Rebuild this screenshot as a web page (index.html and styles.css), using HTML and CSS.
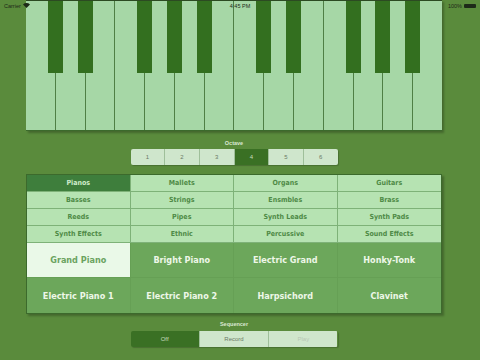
FILE: index.html
```html
<!DOCTYPE html>
<html lang="en">
<head>
    <meta charset="UTF-8">
    <meta name="viewport" content="width=device-width, initial-scale=1.0">
    <title>Synth</title>
    <link rel="stylesheet" href="styles.css">
</head>
<body>
    <!-- status bar -->
    <div class="status-bar">
        <span class="carrier">Carrier
            <svg class="wifi" width="7" height="5" viewBox="0 0 14 10">
                <path d="M7 10 L0 3 A10 10 0 0 1 14 3 Z" fill="#1d2a18"/>
            </svg>
        </span>
        <span class="clock">4:45 PM</span>
        <span class="battery">100% <span class="battery-icon"></span></span>
    </div>

    <div class="main">
        <!-- keyboard -->
        <div class="keyboard">
            <div class="white-key"><div class="black-key"></div></div>
            <div class="white-key"><div class="black-key"></div></div>
            <div class="white-key"></div>
            <div class="white-key"><div class="black-key"></div></div>
            <div class="white-key"><div class="black-key"></div></div>
            <div class="white-key"><div class="black-key"></div></div>
            <div class="white-key"></div>
            <div class="white-key"><div class="black-key"></div></div>
            <div class="white-key"><div class="black-key"></div></div>
            <div class="white-key"></div>
            <div class="white-key"><div class="black-key"></div></div>
            <div class="white-key"><div class="black-key"></div></div>
            <div class="white-key"><div class="black-key"></div></div>
            <div class="white-key"></div>
        </div>

        <div class="section-label octave-label">Octave</div>
        <div class="segmented">
            <div class="segment">1</div>
            <div class="segment">2</div>
            <div class="segment">3</div>
            <div class="segment active">4</div>
            <div class="segment">5</div>
            <div class="segment">6</div>
        </div>

        <!-- sounds -->
        <div class="panel">
            <div class="categories">
                <div class="category active">Pianos</div>
                <div class="category">Mallets</div>
                <div class="category">Organs</div>
                <div class="category">Guitars</div>
                <div class="category">Basses</div>
                <div class="category">Strings</div>
                <div class="category">Ensmbles</div>
                <div class="category">Brass</div>
                <div class="category">Reeds</div>
                <div class="category">Pipes</div>
                <div class="category">Synth Leads</div>
                <div class="category">Synth Pads</div>
                <div class="category">Synth Effects</div>
                <div class="category">Ethnic</div>
                <div class="category">Percussive</div>
                <div class="category">Sound Effects</div>
            </div>
            <div class="instruments">
                <div class="instrument active">Grand Piano</div>
                <div class="instrument">Bright Piano</div>
                <div class="instrument">Electric Grand</div>
                <div class="instrument">Honky-Tonk</div>
                <div class="instrument">Electric Piano 1</div>
                <div class="instrument">Electric Piano 2</div>
                <div class="instrument">Harpsichord</div>
                <div class="instrument">Clavinet</div>
            </div>
        </div>

        <div class="section-label sequencer-label">Sequencer</div>
        <div class="segmented">
            <div class="segment active">Off</div>
            <div class="segment">Record</div>
            <div class="segment disabled">Play</div>
        </div>
    </div>
</body>
</html>
```

FILE: styles.css
```css
body {
    margin: 0;
    width: 480px;
    height: 360px;
    overflow: hidden;
    background-color: #5a8b3c;
    font-family: "Liberation Sans", Arial, sans-serif;
    position: relative;
}

/* status bar */
.status-bar {
    position: absolute;
    top: 0;
    left: 0;
    right: 0;
    height: 11px;
    display: flex;
    justify-content: space-between;
    align-items: center;
    padding: 0 4px;
    font-size: 5.5px;
    color: #1d2a18;
    z-index: 5;
}

.carrier {
    display: flex;
    align-items: center;
    gap: 2px;
}

.clock {
    position: absolute;
    left: 0;
    right: 0;
    text-align: center;
}

.battery {
    display: flex;
    align-items: center;
    gap: 2px;
}

.battery-icon {
    width: 12px;
    height: 4px;
    background-color: #1d2a18;
    border-radius: 1px;
}

.main {
    width: 416px;
    margin-left: 26px;
    display: flex;
    flex-direction: column;
    align-items: center;
}

/* keyboard */
.keyboard {
    width: 416px;
    height: 129px;
    display: flex;
    border-top: 1px solid #2c4a22;
    border-bottom: 1px solid #3b6a2c;
    box-shadow: 2px 2px 2px rgba(0, 0, 0, 0.25);
}

.white-key {
    flex: 1;
    position: relative;
    background-color: #a6d7a6;
    border-right: 1px solid #4f7f45;
}

.white-key:last-child {
    border-right: none;
}

.black-key {
    position: absolute;
    top: 0;
    right: -8px;
    width: 15px;
    height: 72px;
    background-color: #336f1f;
    z-index: 2;
}

/* labels */
.section-label {
    font-size: 5.5px;
    font-weight: bold;
    color: #dbe8d2;
    text-align: center;
}

.octave-label {
    margin-top: 8px;
    height: 9px;
    line-height: 9px;
}

.sequencer-label {
    margin-top: 5px;
    height: 11px;
    line-height: 11px;
}

/* segmented controls */
.segmented {
    width: 207px;
    height: 16px;
    display: flex;
    margin-top: 1px;
    border-radius: 2px;
    overflow: hidden;
    box-shadow: 1px 1px 1px rgba(0, 0, 0, 0.2);
}

.segment {
    flex: 1;
    background-color: #cfe6cc;
    border-right: 1px solid #9fbf9a;
    color: #6b7a66;
    font-size: 6px;
    display: flex;
    align-items: center;
    justify-content: center;
}

.segment:last-child {
    border-right: none;
}

.segment.active {
    background-color: #3a7024;
    color: #c7ddbc;
}

.segment.disabled {
    color: #b8c6b4;
}

/* sound panel */
.panel {
    width: 416px;
    margin-top: 9px;
    border: 1px solid #3c6a2c;
    box-sizing: border-box;
    box-shadow: 2px 2px 2px rgba(0, 0, 0, 0.25);
    font-family: "DejaVu Sans Condensed", "DejaVu Sans", sans-serif;
    font-weight: bold;
}

.categories {
    display: grid;
    grid-template-columns: repeat(4, 1fr);
    grid-auto-rows: 17px;
    background-color: #b6e3b2;
}

.category {
    display: flex;
    align-items: center;
    justify-content: center;
    font-size: 7px;
    color: #4e8a46;
    border-right: 1px solid #7eb278;
    border-bottom: 1px solid #7eb278;
}

.category:nth-child(4n) {
    border-right: none;
}

.category.active {
    background-color: #3e7e3c;
    color: #cfeccb;
}

.instruments {
    display: grid;
    grid-template-columns: repeat(4, 1fr);
    grid-auto-rows: 35px;
    background-color: #6ca75b;
}

.instrument {
    display: flex;
    align-items: center;
    justify-content: center;
    font-size: 9px;
    color: #eef7e8;
    border-right: 1px solid #66a055;
    border-bottom: 1px solid #66a055;
}

.instrument:nth-child(4n) {
    border-right: none;
}

.instrument:nth-child(n+5) {
    border-bottom: none;
}

.instrument.active {
    background-color: #eaf9e8;
    color: #6aa360;
}
```
